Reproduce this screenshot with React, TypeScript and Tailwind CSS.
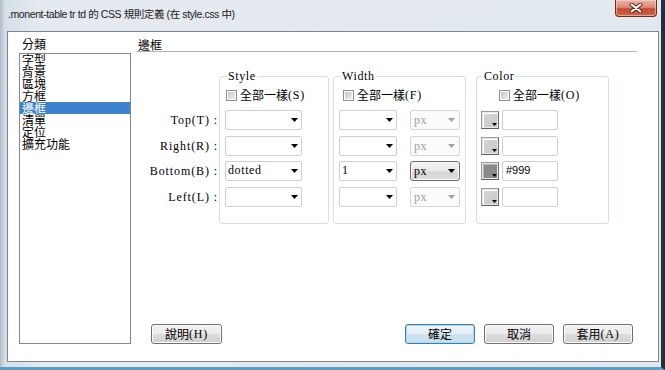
import React from "react";

const CJK = "font-['Noto_Sans_CJK_TC','Liberation_Sans',sans-serif]";
const SERIF = "font-['Liberation_Serif','Noto_Sans_CJK_TC',serif]";

function Arrow({ gray }: { gray?: boolean }) {
  return (
    <svg width="7" height="4" viewBox="0 0 7 4" className="shrink-0">
      <polygon points="0,0 7,0 3.5,4" fill={gray ? "#a3a3a3" : "#000"} />
    </svg>
  );
}

function Check({ text, k }: { text: string; k: string }) {
  return (
    <div className="flex items-center h-[14px]">
      <div className="w-[11px] h-[11px] border border-[#8e8f8f] bg-white p-[1px] shrink-0">
        <div className="w-full h-full bg-[linear-gradient(135deg,#c2c6cb,#eef0f2)]" />
      </div>
      <span className={`ml-[3px] text-[12px] leading-[14px] text-black ${CJK}`}>{text}</span>
      <span className={`text-[12px] leading-[14px] tracking-[0.8px] text-black ${SERIF}`}>({k})</span>
    </div>
  );
}

const rowMt = ["", "mt-[6px]", "mt-[5px]", "mt-[6px]"];

const rows = [
  { label: "Top(T) :", style: "", width: "", active: false, color: "", swatch: "" },
  { label: "Right(R) :", style: "", width: "", active: false, color: "", swatch: "" },
  { label: "Bottom(B) :", style: "dotted", width: "1", active: true, color: "#999", swatch: "dark" },
  { label: "Left(L) :", style: "", width: "", active: false, color: "", swatch: "" },
];

function Swatch({ dark }: { dark?: boolean }) {
  return (
    <div className="relative w-[18px] h-[18px] border border-[#9a9a9a] border-r-[#6d6d6d] border-b-[#5f5f5f] bg-[#e8e8e8] p-[1px] shrink-0 mt-[1px]">
      <div
        className={
          dark
            ? "w-full h-full border-t border-l border-t-[#b0b0b0] border-l-[#b0b0b0] bg-[#8a8a8a]"
            : "w-full h-full border-t border-l border-t-white border-l-white bg-[linear-gradient(135deg,#d6d6d6,#c6c6c6)]"
        }
      />
      <div className="absolute right-[1px] bottom-[2px]">
        <svg width="5" height="3" viewBox="0 0 5 3">
          <polygon points="0,0 5,0 2.5,3" fill="#000" />
        </svg>
      </div>
    </div>
  );
}

function Button({ label, k, w, primary }: { label: string; k?: string; w: string; primary?: boolean }) {
  return (
    <div
      className={`${w} h-[20px] rounded-[3px] border flex items-center justify-center ${
        primary
          ? "border-[#3c7fb1] shadow-[inset_0_0_0_1px_#a8dbf5] bg-[linear-gradient(#f0f6fa,#e2eef6_48%,#cfe2ee_52%,#c9deec)]"
          : "border-[#707070] shadow-[inset_0_0_0_1px_#fcfcfc] bg-[linear-gradient(#f2f2f2,#ebebeb_48%,#dddddd_52%,#cfcfcf)]"
      }`}
    >
      <span className={`text-[12px] leading-[14px] text-black ${CJK}`}>{label}</span>
      {k && <span className={`text-[12px] leading-[14px] tracking-[0.8px] text-black ${SERIF}`}>({k})</span>}
    </div>
  );
}

export default function App() {
  const cats = ["字型", "背景", "區塊", "方框", "邊框", "清單", "定位", "擴充功能"];
  return (
    <div className="w-[665px] h-[370px] flex flex-col pl-[7px] pr-[2px] pb-[5px] border-r-[4px] border-r-[#22303d] border-b-[3px] border-b-[#5d9ec6] bg-[linear-gradient(90deg,#aebdca_0px,#d6dfe7_5px,#e4eaf0_40px,#e1e8ee_100%)] overflow-hidden">
      {/* Title bar */}
      <div className="h-[31px] flex items-start shrink-0">
        <div className="pt-[6px] pl-[1px] text-[10.5px] leading-[16px] tracking-[-0.4px] text-[#1a1a1a] font-['Liberation_Sans','Noto_Sans_CJK_TC',sans-serif]">
          .monent-table tr td 的 CSS 規則定義 (在 style.css 中)
        </div>
        <div className="ml-auto mr-[2px] w-[42px] h-[17px] rounded-b-[4px] border border-t-0 border-[#6e2a22] bg-[linear-gradient(#eab3a6,#dc8b78_45%,#c74a33_55%,#d0634a)] shadow-[inset_0_0_0_1px_rgba(255,220,210,0.55)] flex items-center justify-center">
          <svg width="14" height="10" viewBox="0 0 14 10">
            <path d="M2.5 1.5 L11.5 8.5 M11.5 1.5 L2.5 8.5" stroke="#4a2a26" strokeWidth="4" strokeLinecap="round" />
            <path d="M2.5 1.5 L11.5 8.5 M11.5 1.5 L2.5 8.5" stroke="#fff" strokeWidth="2" strokeLinecap="round" />
          </svg>
        </div>
      </div>

      {/* Client panel */}
      <div className="flex-1 bg-white border border-[#7d8791] flex pl-[11px] pr-[21px] pb-[17px]">
        {/* Category column */}
        <div className="w-[112px] flex flex-col pt-[5px] shrink-0">
          <div className={`h-[14px] leading-[14px] text-[12px] text-black pl-[3px] ${CJK}`}>分類</div>
          <div className="mt-[2px] flex-1 border border-[#828790] flex flex-col">
            {cats.map((c, i) => (
              <div
                key={c}
                className={`h-[12px] leading-[12px] text-[12px] pl-[2px] ${CJK} ${
                  i === 4 ? "bg-[#3d82cd] text-white" : "text-black"
                }`}
              >
                {c}
              </div>
            ))}
          </div>
        </div>

        {/* Right column */}
        <div className="ml-[6px] flex-1 flex flex-col pt-[6px]">
          <div className={`h-[14px] leading-[13px] text-[12px] text-black pl-[1px] border-b border-b-[#b4b4b4] ${CJK}`}>邊框</div>

          <div className="mt-[18px] flex items-start">
            {/* labels */}
            <div className="w-[82px] pt-[40px] flex flex-col shrink-0">
              {rows.map((r, i) => (
                <div
                  key={r.label}
                  className={`h-[20px] flex items-center justify-end pr-[1px] text-[12px] tracking-[0.9px] text-black whitespace-pre ${SERIF} ${rowMt[i]}`}
                >
                  {r.label}
                </div>
              ))}
            </div>

            {/* Style */}
            <fieldset className="w-[110px] border border-[#d5dfe5] rounded-[3px] shrink-0">
              <legend className={`ml-[7px] px-[1px] text-[12px] leading-[12px] tracking-[0.6px] text-black ${SERIF}`}>Style</legend>
              <div className="pt-[6px] pb-[16px] pl-[5px]">
                <div className="pl-[1px] mb-[8px]">
                  <Check text="全部一樣" k="S" />
                </div>
                {rows.map((r, i) => (
                  <div
                    key={r.label}
                    className={`w-[77px] h-[20px] border border-[#cfcfcf] rounded-[2px] bg-white flex items-center pl-[2px] pr-[3px] ${rowMt[i]}`}
                  >
                    <span className={`flex-1 text-[12px] tracking-[0.6px] leading-[14px] text-black -mt-[3px] ${SERIF}`}>{r.style}</span>
                    <Arrow />
                  </div>
                ))}
              </div>
            </fieldset>

            {/* Width */}
            <fieldset className="ml-[4px] w-[133px] border border-[#d5dfe5] rounded-[3px] shrink-0">
              <legend className={`ml-[7px] px-[1px] text-[12px] leading-[12px] tracking-[0.6px] text-black ${SERIF}`}>Width</legend>
              <div className="pt-[6px] pb-[16px] pl-[5px]">
                <div className="pl-[4px] mb-[8px]">
                  <Check text="全部一樣" k="F" />
                </div>
                {rows.map((r, i) => (
                  <div key={r.label} className={`flex ${rowMt[i]}`}>
                    <div className="w-[58px] h-[20px] border border-[#cfcfcf] rounded-[2px] bg-white flex items-center pl-[2px] pr-[3px]">
                      <span className={`flex-1 text-[12px] tracking-[0.6px] leading-[14px] text-black -mt-[3px] ${SERIF}`}>{r.width}</span>
                      <Arrow />
                    </div>
                    {r.active ? (
                      <div className="ml-[13px] w-[50px] h-[20px] border border-[#6b6b6b] rounded-[3px] bg-[linear-gradient(#f4f4f4,#e8e8e8_50%,#d6d6d6_55%,#dcdcdc)] shadow-[inset_0_0_0_1px_#fafafa] flex items-center pl-[3px] pr-[4px]">
                        <span className={`flex-1 text-[12px] tracking-[0.6px] leading-[14px] text-black ${SERIF}`}>px</span>
                        <Arrow />
                      </div>
                    ) : (
                      <div className="ml-[13px] w-[50px] h-[20px] border border-[#d6d6d6] rounded-[2px] bg-[#fbfbfb] flex items-center pl-[3px] pr-[4px]">
                        <span className={`flex-1 text-[12px] tracking-[0.6px] leading-[14px] text-[#9e9e9e] ${SERIF}`}>px</span>
                        <Arrow gray />
                      </div>
                    )}
                  </div>
                ))}
              </div>
            </fieldset>

            {/* Color */}
            <fieldset className="ml-[10px] w-[133px] border border-[#d5dfe5] rounded-[3px] shrink-0">
              <legend className={`ml-[6px] px-[1px] text-[12px] leading-[12px] tracking-[0.6px] text-black ${SERIF}`}>Color</legend>
              <div className="pt-[6px] pb-[16px] pl-[4px]">
                <div className="pl-[18px] mb-[8px]">
                  <Check text="全部一樣" k="O" />
                </div>
                {rows.map((r, i) => (
                  <div key={r.label} className={`flex h-[20px] ${rowMt[i]}`}>
                    <Swatch dark={r.swatch === "dark"} />
                    <div className="ml-[3px] w-[56px] h-[20px] border border-[#cfcfcf] rounded-[2px] bg-white flex items-center pl-[3px]">
                      <span className="text-[11px] leading-[14px] text-black -mt-[2px] font-['Liberation_Sans',sans-serif]">{r.color}</span>
                    </div>
                  </div>
                ))}
              </div>
            </fieldset>
          </div>

          {/* Buttons */}
          <div className="mt-auto flex items-center pl-[14px] pr-[4px]">
            <Button label="說明" k="H" w="w-[71px]" />
            <div className="ml-auto flex gap-[9px]">
              <Button label="確定" w="w-[70px]" primary />
              <Button label="取消" w="w-[70px]" />
              <Button label="套用" k="A" w="w-[70px]" />
            </div>
          </div>
        </div>
      </div>
    </div>
  );
}
